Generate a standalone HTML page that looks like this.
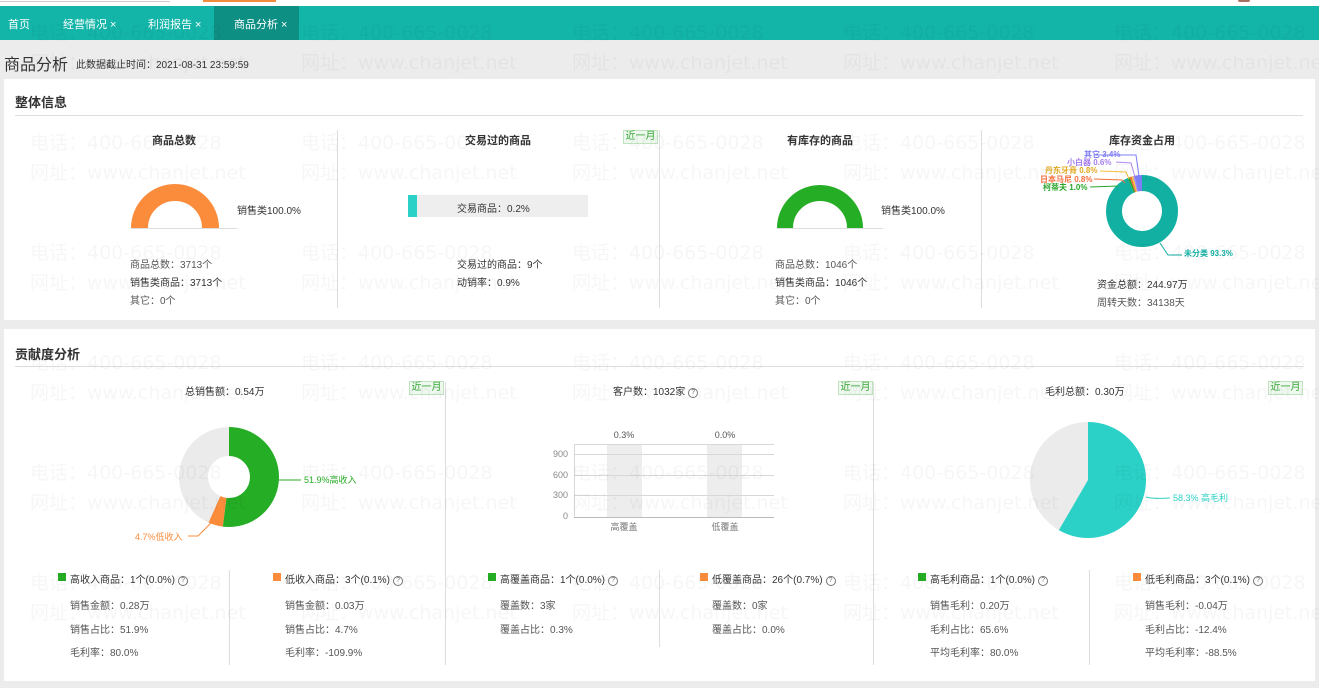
<!DOCTYPE html>
<html style="width:1319px;height:688px;overflow:hidden"><head><meta charset="utf-8">
<style>
*{margin:0;padding:0;box-sizing:border-box}
body{width:1319px;height:688px;overflow:hidden;background:#ececec;font-family:"Liberation Sans","Noto Sans CJK SC",sans-serif;color:#333;position:relative;font-size:10px}
.a{position:absolute;white-space:nowrap}
.top{position:absolute;left:0;top:0;width:1319px;height:6px;background:#fff}
.nav{position:absolute;left:0;top:6px;width:1319px;height:34px;background:#13b5a8}
.nav span{position:absolute;top:10px;color:#fff;font-size:11px}
.panel{position:absolute;background:#fff;left:4px;width:1311px}
.h{font-size:13px;font-weight:bold;color:#333}
.line{position:absolute;height:1px;background:#ddd}
.vl{position:absolute;width:1px;background:#ddd}
.t{font-size:11px;font-weight:bold;color:#333}
.tag{position:absolute;width:35px;height:14px;border:1px solid #bfe3bf;background:#eef8ee;color:#36a536;font-size:10px;line-height:12px;text-align:center}
.sq{position:absolute;width:8px;height:8px}
.q{display:inline-block;width:10px;height:10px;border:1px solid #777;border-radius:50%;font-size:7px;line-height:8px;text-align:center;color:#777;vertical-align:1px;margin-left:3px}
.wm{position:absolute;color:rgba(0,0,0,0.035);font-size:19px;white-space:nowrap;font-family:"DejaVu Sans","Noto Sans CJK SC",sans-serif;pointer-events:none}
.g{color:#555}
</style></head><body>
<div class="top"><div class="a" style="left:0;top:0;width:170px;height:2px;border-bottom:1px solid #ccc"></div><div class="a" style="left:203px;top:0;width:73px;height:2px;background:#f28a3c"></div><div class="a" style="left:1238px;top:0;width:12px;height:2px;background:#a87060;border-radius:0 0 6px 6px"></div></div>
<div class="nav">
<div class="a" style="left:214px;top:0;width:85px;height:34px;background:#0e8f84"></div>
<span style="left:8px">首页</span>
<span style="left:63px">经营情况 ×</span>
<span style="left:148px">利润报告 ×</span>
<span style="left:234px">商品分析 ×</span>
</div>
<div class="a" style="left:4px;top:51px;font-size:16px;color:#333">商品分析</div>
<div class="a" style="left:76px;top:56px;font-size:10px;color:#333">此数据截止时间：2021-08-31 23:59:59</div>

<div class="panel" style="top:79px;height:241px">
<div class="a h" style="left:11px;top:13px">整体信息</div>
<div class="line" style="left:11px;top:36px;width:1288px"></div>
<div class="vl" style="left:333px;top:51px;height:178px"></div>
<div class="vl" style="left:655px;top:51px;height:178px"></div>
<div class="vl" style="left:977px;top:51px;height:178px"></div>
</div>
<div class="a t" style="left:152px;top:132px">商品总数</div>
<div class="a t" style="left:465px;top:132px">交易过的商品</div>
<div class="a t" style="left:787px;top:132px">有库存的商品</div>
<div class="a t" style="left:1109px;top:132px">库存资金占用</div>
<div class="tag" style="left:623px;top:130px">近一月</div>
<svg class="a" style="left:0;top:0" width="1319" height="688">
<line x1="131" y1="228.5" x2="237" y2="228.5" stroke="#ddd"/>
<path d="M139.5,228 A35.5,35.5 0 0 1 210.5,228" fill="none" stroke="#fb8c3c" stroke-width="17"/>
<line x1="777" y1="228.5" x2="883" y2="228.5" stroke="#ddd"/>
<path d="M785,228 A35,35 0 0 1 855,228" fill="none" stroke="#25ad25" stroke-width="16"/>
<rect x="408" y="195" width="180" height="22" fill="#eeeeee"/>
<rect x="408" y="195" width="9" height="22" fill="#2bd1c6"/>
<g transform="translate(1142,211) rotate(-90)" fill="none" stroke-width="16">
<circle r="28" stroke="#12b0a3" stroke-dasharray="164.1 200"/>
<circle r="28" stroke="#2aa52a" stroke-dasharray="1.76 200" stroke-dashoffset="-164.1"/>
<circle r="28" stroke="#f36e3c" stroke-dasharray="1.41 200" stroke-dashoffset="-165.86"/>
<circle r="28" stroke="#f5c03c" stroke-dasharray="1.41 200" stroke-dashoffset="-167.27"/>
<circle r="28" stroke="#b08af0" stroke-dasharray="1.06 200" stroke-dashoffset="-168.68"/>
<circle r="28" stroke="#7f7ff5" stroke-dasharray="6.0 200" stroke-dashoffset="-169.74"/>
</g>
<polyline points="1160,243 1168,255 1182,255" fill="none" stroke="#12b0a3"/>
<polyline points="1095,155 1136,155 1139,176" fill="none" stroke="#7f7ff5"/>
<polyline points="1116,162 1131,163 1135,177" fill="none" stroke="#b08af0"/>
<polyline points="1100,171 1126,172 1129,179" fill="none" stroke="#f5c03c"/>
<polyline points="1094,179 1122,180 1125,183" fill="none" stroke="#f36e3c"/>
<polyline points="1090,187 1118,186" fill="none" stroke="#2aa52a"/>
<g font-size="8" font-weight="bold" font-family="Liberation Sans,Noto Sans CJK SC,sans-serif">
<text x="1084" y="157" fill="#7f7ff5">其它 3.4%</text>
<text x="1067" y="165" fill="#a77ef0">小白器 0.6%</text>
<text x="1045" y="173" fill="#e0a820">丹东牙膏 0.8%</text>
<text x="1040" y="182" fill="#f36e3c">日本马尼 0.8%</text>
<text x="1043" y="190" fill="#2aa52a">柯蒂夫 1.0%</text>
<text x="1184" y="256" fill="#12b0a3">未分类 93.3%</text>
</g>

<g transform="translate(229,477) rotate(-90)" fill="none" stroke-width="29">
<circle r="35.5" stroke="#ebebeb"/>
<circle r="35.5" stroke="#25ad25" stroke-dasharray="115.8 300"/>
<circle r="35.5" stroke="#fb8c3c" stroke-dasharray="10.5 300" stroke-dashoffset="-115.8"/>
</g>
<line x1="279" y1="480" x2="301" y2="480" stroke="#25ad25"/>
<polyline points="212,522 198,536 188,536" fill="none" stroke="#fb8c3c"/>
<g font-size="9" font-family="Liberation Sans,Noto Sans CJK SC,sans-serif">
<text x="304" y="483" fill="#25ad25">51.9%高收入</text>
<text x="135" y="540" fill="#fb8c3c">4.7%低收入</text>
<text x="1173" y="501" fill="#2bd1c6">58.3% 高毛利</text>
</g>
<g transform="translate(1088,480) rotate(-90)" fill="none" stroke-width="58">
<circle r="29" stroke="#ebebeb"/>
<circle r="29" stroke="#2bd1c6" stroke-dasharray="106.2 300"/>
</g>
<path d="M1146,497 Q1152,499 1170,498" fill="none" stroke="#2bd1c6"/>
<rect x="607" y="444" width="35" height="73" fill="#ededed"/>
<rect x="707" y="444" width="35" height="73" fill="#ededed"/>
<g stroke="#d8d8d8"><line x1="574" y1="444.5" x2="774" y2="444.5"/><line x1="574" y1="454.5" x2="774" y2="454.5"/><line x1="574" y1="475.5" x2="774" y2="475.5"/><line x1="574" y1="495.5" x2="774" y2="495.5"/><line x1="574.5" y1="444" x2="574.5" y2="517"/></g>
<line x1="574" y1="517.5" x2="774" y2="517.5" stroke="#bbb"/>
<g font-size="9" fill="#888" font-family="Liberation Sans,Noto Sans CJK SC,sans-serif" text-anchor="end">
<text x="568" y="457">900</text><text x="568" y="478">600</text><text x="568" y="498">300</text><text x="568" y="519">0</text>
</g>
<g font-size="9" font-family="Liberation Sans,Noto Sans CJK SC,sans-serif" text-anchor="middle">
<text x="624" y="438" fill="#555">0.3%</text><text x="725" y="438" fill="#555">0.0%</text>
<text x="624" y="530" fill="#777">高覆盖</text><text x="725" y="530" fill="#777">低覆盖</text>
</g>
</svg>
<div class="a" style="left:237px;top:202px">销售类100.0%</div>
<div class="a" style="left:881px;top:202px">销售类100.0%</div>
<div class="a" style="left:457px;top:200px;font-size:10px">交易商品：0.2%</div>
<div class="a g" style="left:130px;top:256px">商品总数：3713个</div>
<div class="a" style="left:130px;top:274px">销售类商品：3713个</div>
<div class="a g" style="left:130px;top:292px">其它：0个</div>
<div class="a" style="left:457px;top:256px">交易过的商品：9个</div>
<div class="a" style="left:457px;top:274px">动销率：0.9%</div>
<div class="a g" style="left:775px;top:256px">商品总数：1046个</div>
<div class="a" style="left:775px;top:274px">销售类商品：1046个</div>
<div class="a g" style="left:775px;top:292px">其它：0个</div>
<div class="a" style="left:1097px;top:276px">资金总额：244.97万</div>
<div class="a g" style="left:1097px;top:294px">周转天数：34138天</div>

<div class="panel" style="top:329px;height:352px;z-index:-1">
<div class="a h" style="left:11px;top:15px">贡献度分析</div>
<div class="line" style="left:11px;top:37px;width:1288px"></div>
<div class="vl" style="left:441px;top:53px;height:283px"></div>
<div class="vl" style="left:869px;top:53px;height:283px"></div>
<div class="vl" style="left:225px;top:241px;height:95px"></div>
<div class="vl" style="left:655px;top:241px;height:77px"></div>
<div class="vl" style="left:1085px;top:241px;height:95px"></div>
</div>
<div class="a" style="left:185px;top:383px;font-size:10px">总销售额：0.54万</div>
<div class="a" style="left:613px;top:383px;font-size:10px">客户数：1032家<span class="q">?</span></div>
<div class="a" style="left:1045px;top:383px;font-size:10px">毛利总额：0.30万</div>
<div class="tag" style="left:409px;top:381px">近一月</div>
<div class="tag" style="left:838px;top:381px">近一月</div>
<div class="tag" style="left:1268px;top:381px">近一月</div>

<div class="sq" style="left:58px;top:573px;background:#25ad25"></div><div class="a" style="left:70px;top:571px">高收入商品：1个(0.0%)<span class="q">?</span></div>
<div class="a g" style="left:70px;top:597px">销售金额：0.28万</div><div class="a g" style="left:70px;top:621px">销售占比：51.9%</div><div class="a g" style="left:70px;top:644px">毛利率：80.0%</div>
<div class="sq" style="left:273px;top:573px;background:#fb8c3c"></div><div class="a" style="left:285px;top:571px">低收入商品：3个(0.1%)<span class="q">?</span></div>
<div class="a g" style="left:285px;top:597px">销售金额：0.03万</div><div class="a g" style="left:285px;top:621px">销售占比：4.7%</div><div class="a g" style="left:285px;top:644px">毛利率：-109.9%</div>

<div class="sq" style="left:488px;top:573px;background:#25ad25"></div><div class="a" style="left:500px;top:571px">高覆盖商品：1个(0.0%)<span class="q">?</span></div>
<div class="a g" style="left:500px;top:597px">覆盖数：3家</div><div class="a g" style="left:500px;top:621px">覆盖占比：0.3%</div>
<div class="sq" style="left:700px;top:573px;background:#fb8c3c"></div><div class="a" style="left:712px;top:571px">低覆盖商品：26个(0.7%)<span class="q">?</span></div>
<div class="a g" style="left:712px;top:597px">覆盖数：0家</div><div class="a g" style="left:712px;top:621px">覆盖占比：0.0%</div>

<div class="sq" style="left:918px;top:573px;background:#25ad25"></div><div class="a" style="left:930px;top:571px">高毛利商品：1个(0.0%)<span class="q">?</span></div>
<div class="a g" style="left:930px;top:597px">销售毛利：0.20万</div><div class="a g" style="left:930px;top:621px">毛利占比：65.6%</div><div class="a g" style="left:930px;top:644px">平均毛利率：80.0%</div>
<div class="sq" style="left:1133px;top:573px;background:#fb8c3c"></div><div class="a" style="left:1145px;top:571px">低毛利商品：3个(0.1%)<span class="q">?</span></div>
<div class="a g" style="left:1145px;top:597px">销售毛利：-0.04万</div><div class="a g" style="left:1145px;top:621px">毛利占比：-12.4%</div><div class="a g" style="left:1145px;top:644px">平均毛利率：-88.5%</div>

<div class="wm" style="left:30px;top:18px">电话：400-665-0028</div><div class="wm" style="left:301px;top:18px">电话：400-665-0028</div><div class="wm" style="left:572px;top:18px">电话：400-665-0028</div><div class="wm" style="left:843px;top:18px">电话：400-665-0028</div><div class="wm" style="left:1114px;top:18px">电话：400-665-0028</div>
<div class="wm" style="left:30px;top:48px">网址：www.chanjet.net</div><div class="wm" style="left:301px;top:48px">网址：www.chanjet.net</div><div class="wm" style="left:572px;top:48px">网址：www.chanjet.net</div><div class="wm" style="left:843px;top:48px">网址：www.chanjet.net</div><div class="wm" style="left:1114px;top:48px">网址：www.chanjet.net</div>
<div class="wm" style="left:30px;top:128px">电话：400-665-0028</div><div class="wm" style="left:301px;top:128px">电话：400-665-0028</div><div class="wm" style="left:572px;top:128px">电话：400-665-0028</div><div class="wm" style="left:843px;top:128px">电话：400-665-0028</div><div class="wm" style="left:1114px;top:128px">电话：400-665-0028</div>
<div class="wm" style="left:30px;top:158px">网址：www.chanjet.net</div><div class="wm" style="left:301px;top:158px">网址：www.chanjet.net</div><div class="wm" style="left:572px;top:158px">网址：www.chanjet.net</div><div class="wm" style="left:843px;top:158px">网址：www.chanjet.net</div><div class="wm" style="left:1114px;top:158px">网址：www.chanjet.net</div>
<div class="wm" style="left:30px;top:238px">电话：400-665-0028</div><div class="wm" style="left:301px;top:238px">电话：400-665-0028</div><div class="wm" style="left:572px;top:238px">电话：400-665-0028</div><div class="wm" style="left:843px;top:238px">电话：400-665-0028</div><div class="wm" style="left:1114px;top:238px">电话：400-665-0028</div>
<div class="wm" style="left:30px;top:268px">网址：www.chanjet.net</div><div class="wm" style="left:301px;top:268px">网址：www.chanjet.net</div><div class="wm" style="left:572px;top:268px">网址：www.chanjet.net</div><div class="wm" style="left:843px;top:268px">网址：www.chanjet.net</div><div class="wm" style="left:1114px;top:268px">网址：www.chanjet.net</div>
<div class="wm" style="left:30px;top:348px">电话：400-665-0028</div><div class="wm" style="left:301px;top:348px">电话：400-665-0028</div><div class="wm" style="left:572px;top:348px">电话：400-665-0028</div><div class="wm" style="left:843px;top:348px">电话：400-665-0028</div><div class="wm" style="left:1114px;top:348px">电话：400-665-0028</div>
<div class="wm" style="left:30px;top:378px">网址：www.chanjet.net</div><div class="wm" style="left:301px;top:378px">网址：www.chanjet.net</div><div class="wm" style="left:572px;top:378px">网址：www.chanjet.net</div><div class="wm" style="left:843px;top:378px">网址：www.chanjet.net</div><div class="wm" style="left:1114px;top:378px">网址：www.chanjet.net</div>
<div class="wm" style="left:30px;top:458px">电话：400-665-0028</div><div class="wm" style="left:301px;top:458px">电话：400-665-0028</div><div class="wm" style="left:572px;top:458px">电话：400-665-0028</div><div class="wm" style="left:843px;top:458px">电话：400-665-0028</div><div class="wm" style="left:1114px;top:458px">电话：400-665-0028</div>
<div class="wm" style="left:30px;top:488px">网址：www.chanjet.net</div><div class="wm" style="left:301px;top:488px">网址：www.chanjet.net</div><div class="wm" style="left:572px;top:488px">网址：www.chanjet.net</div><div class="wm" style="left:843px;top:488px">网址：www.chanjet.net</div><div class="wm" style="left:1114px;top:488px">网址：www.chanjet.net</div>
<div class="wm" style="left:30px;top:568px">电话：400-665-0028</div><div class="wm" style="left:301px;top:568px">电话：400-665-0028</div><div class="wm" style="left:572px;top:568px">电话：400-665-0028</div><div class="wm" style="left:843px;top:568px">电话：400-665-0028</div><div class="wm" style="left:1114px;top:568px">电话：400-665-0028</div>
<div class="wm" style="left:30px;top:598px">网址：www.chanjet.net</div><div class="wm" style="left:301px;top:598px">网址：www.chanjet.net</div><div class="wm" style="left:572px;top:598px">网址：www.chanjet.net</div><div class="wm" style="left:843px;top:598px">网址：www.chanjet.net</div><div class="wm" style="left:1114px;top:598px">网址：www.chanjet.net</div>
</body></html>
